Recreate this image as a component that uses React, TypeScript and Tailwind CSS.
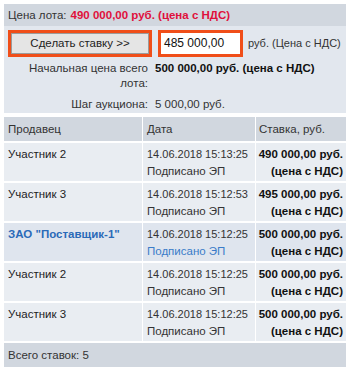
import React from 'react';

const ROWS = [
  { seller: 'Участник 2', date: '14.06.2018 15:13:25', price: '490 000,00 руб.', own: false },
  { seller: 'Участник 3', date: '14.06.2018 15:12:53', price: '495 000,00 руб.', own: false },
  { seller: 'ЗАО "Поставщик-1"', date: '14.06.2018 15:12:25', price: '500 000,00 руб.', own: true },
  { seller: 'Участник 2', date: '14.06.2018 15:12:25', price: '500 000,00 руб.', own: false },
  { seller: 'Участник 3', date: '14.06.2018 15:12:25', price: '500 000,00 руб.', own: false },
];

const App: React.FC = () => {
  return (
    <div className="w-[350px] h-[372px] bg-white pt-[4px] px-[4px] text-[11.5px] leading-[15px] text-[#222] font-['Liberation_Sans',Arial,sans-serif] whitespace-nowrap">
      <div className="h-[22px] bg-[#d1d7df] flex items-center px-[4px]">
        <span className="text-[#333]">Цена лота:</span>
        <span className="ml-[4px] font-bold text-[#e0103c]">490 000,00 руб. (цена с НДС)</span>
      </div>

      <div className="bg-[#e2e7ee] h-[87px]">
        <div className="flex items-center pt-[4px] pl-[4px]">
          <div className="border-[3px] border-[#f04e19] w-[144px] h-[27px]">
            <button className="w-full h-full bg-[#e5e5e5] border border-[#9b9b9b] text-[#222]">
              Сделать ставку &gt;&gt;
            </button>
          </div>
          <div className="ml-[6px] border-[3px] border-[#f04e19] w-[85px] h-[27px] bg-white flex items-center pl-[3px] text-[12px] text-[#111]">
            485 000,00
          </div>
          <span className="ml-[5px] text-[11px] text-[#333]">руб. (Цена с НДС)</span>
        </div>

        <div className="grid grid-cols-[144px_1fr] gap-x-[7px] mt-[4px] text-[#333]">
          <div className="text-right leading-[15px]">
            Начальная цена всего
            <br />
            лота:
          </div>
          <div className="font-bold text-[#111] leading-[15px]">500 000,00 руб. (цена с НДС)</div>
          <div className="text-right mt-[6px]">Шаг аукциона:</div>
          <div className="mt-[6px]">5 000,00 руб.</div>
        </div>
      </div>

      <div className="h-[4px]" />

      <div className="grid grid-cols-[138px_112px_90px] gap-x-[1px] gap-y-[2px] bg-white">
        <div className="bg-[#d1d7df] h-[24px] flex items-center px-[4px] text-[#333]">Продавец</div>
        <div className="bg-[#d1d7df] h-[24px] flex items-center px-[4px] text-[#333]">Дата</div>
        <div className="bg-[#d1d7df] h-[24px] flex items-center px-[3px] text-[#333]">Ставка, руб.</div>
        {ROWS.map((r, i) => {
          const bg = r.own ? 'bg-[#dfe5ee]' : 'bg-[#e9edf2]';
          return (
            <React.Fragment key={i}>
              <div className={`${bg} h-[38px] px-[4px] pt-[4px] ${r.own ? 'font-bold text-[#2a6ab8]' : 'text-[#222]'}`}>
                {r.seller}
              </div>
              <div className={`${bg} h-[38px] pl-[4px] pt-[3px] leading-[17px] text-[11px] text-[#333]`}>
                <div>{r.date}</div>
                <div className={`text-[11.5px] ${r.own ? 'text-[#3a7cc9]' : ''}`}>Подписано ЭП</div>
              </div>
              <div className={`${bg} h-[38px] pr-[3px] pt-[3px] leading-[17px] font-bold text-right text-[#111]`}>
                <div>{r.price}</div>
                <div>(цена с НДС)</div>
              </div>
            </React.Fragment>
          );
        })}
        <div className="col-span-3 bg-[#d1d7df] h-[24px] flex items-center px-[4px] text-[#333]">Всего ставок: 5</div>
      </div>
    </div>
  );
};

export default App;
